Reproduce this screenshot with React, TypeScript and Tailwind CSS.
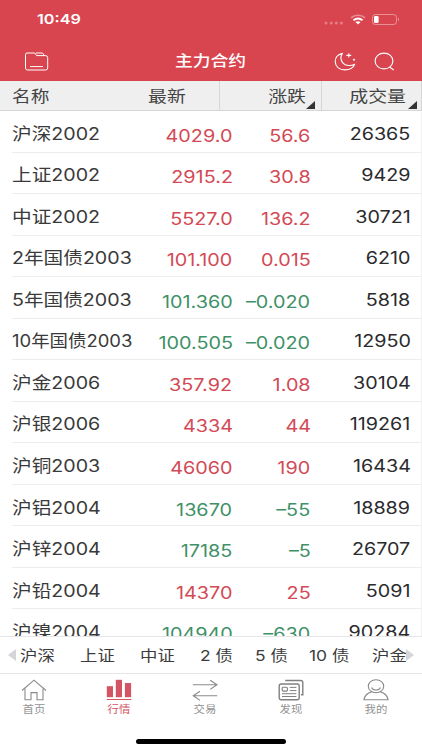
import React from 'react';

interface Quote {
  name: string;
  last: string;
  change: string;
  volume: string;
  down?: boolean;
  long?: boolean;
}

const quotes: Quote[] = [
  { name: '沪深2002', last: '4029.0', change: '56.6', volume: '26365' },
  { name: '上证2002', last: '2915.2', change: '30.8', volume: '9429' },
  { name: '中证2002', last: '5527.0', change: '136.2', volume: '30721' },
  { name: '2年国债2003', last: '101.100', change: '0.015', volume: '6210' },
  { name: '5年国债2003', last: '101.360', change: '–0.020', volume: '5818', down: true },
  { name: '10年国债2003', last: '100.505', change: '–0.020', volume: '12950', down: true, long: true },
  { name: '沪金2006', last: '357.92', change: '1.08', volume: '30104' },
  { name: '沪银2006', last: '4334', change: '44', volume: '119261' },
  { name: '沪铜2003', last: '46060', change: '190', volume: '16434' },
  { name: '沪铝2004', last: '13670', change: '–55', volume: '18889', down: true },
  { name: '沪锌2004', last: '17185', change: '–5', volume: '26707', down: true },
  { name: '沪铅2004', last: '14370', change: '25', volume: '5091' },
  { name: '沪镍2004', last: '104940', change: '–630', volume: '90284', down: true },
];

const categories = [
  { label: '沪深', width: 'w-[35px]' },
  { label: '上证', width: 'w-[35px]' },
  { label: '中证', width: 'w-[35px]' },
  { label: '2 债', width: 'w-[30px]' },
  { label: '5 债', width: 'w-[29px]' },
  { label: '10 债', width: 'w-[38px]' },
  { label: '沪金', width: 'w-[35px]' },
];

const HomeIcon = () => (
  <svg width="26" height="22" viewBox="0 0 26 22" fill="none" stroke="#8a8a8a" strokeWidth="1.1">
    <path d="M1 11.5L13 1.2L25 11.5" />
    <path d="M4 9.5V20.7H10V13.6H16V20.7H22V9.5" />
  </svg>
);

const ChartIcon = () => (
  <svg width="26" height="22" viewBox="0 0 26 22" fill="#d35462">
    <rect x="0.8" y="7.2" width="6.2" height="11" />
    <rect x="9.8" y="0.8" width="6.2" height="17.4" />
    <rect x="18.9" y="4" width="6.2" height="14.2" />
    <rect x="0.8" y="20" width="24.5" height="1" />
  </svg>
);

const TradeIcon = () => (
  <svg width="26" height="22" viewBox="0 0 26 22" fill="none" stroke="#8a8a8a" strokeWidth="1.1">
    <path d="M0.8 5.8H25M18.2 1.2L25 5.8L18.2 10.4" />
    <path d="M25.2 16.8H1.2M8 12.2L1.2 16.8L8 21.4" />
  </svg>
);

const NewsIcon = () => (
  <svg width="26" height="22" viewBox="0 0 26 22" fill="none" stroke="#808080" strokeWidth="1.4">
    <path d="M7.2 1.5H22.6Q24.8 1.5 24.8 3.6V15.8H23" />
    <rect x="1.2" y="5" width="20" height="15.8" rx="2" />
    <rect x="4.2" y="8.2" width="5.2" height="3.9" rx="1" strokeWidth="1.1" />
    <path d="M11.8 8.4H18.4M11.8 11.6H18.4M4 14.7H18.4M4 17.5H18.4" strokeWidth="1" />
  </svg>
);

const UserIcon = () => (
  <svg width="26" height="22" viewBox="0 0 26 22" fill="none" stroke="#8a8a8a" strokeWidth="1.1">
    <ellipse cx="13" cy="7.3" rx="7.7" ry="6.5" />
    <path d="M8.6 8.4C10.2 11.8 15.8 11.8 17.4 8.4" />
    <path d="M8.6 12.9C4.6 14 1.6 16.8 0.9 20.8H25.1C24.4 16.8 21.4 14 17.4 12.9" />
  </svg>
);

const navItems = [
  { label: '首页', icon: HomeIcon },
  { label: '行情', icon: ChartIcon, active: true },
  { label: '交易', icon: TradeIcon },
  { label: '发现', icon: NewsIcon },
  { label: '我的', icon: UserIcon },
];

const SortMark = ({ className }: { className: string }) => (
  <svg className={`absolute bottom-[1px] ${className}`} width="9" height="8" viewBox="0 0 9 8">
    <path d="M9 0V8H0Z" fill="#333" />
  </svg>
);

const StatusBar = () => (
  <div className="h-[39px] flex items-center justify-between pl-[37px] pr-[22px]">
    <span className="inline-block origin-left scale-x-[1.18] text-[13.7px] font-semibold leading-none">10:49</span>
    <div className="flex items-center">
      <svg className="mt-[6px]" width="20" height="4" viewBox="0 0 20 4" fill="#fff" opacity="0.3">
        <circle cx="2" cy="2" r="1.5" />
        <circle cx="7.2" cy="2" r="1.5" />
        <circle cx="12.3" cy="2" r="1.5" />
        <circle cx="17.4" cy="2" r="1.5" />
      </svg>
      <svg className="ml-[6px]" width="16" height="11" viewBox="0 0 16 11" fill="none" stroke="#fff">
        <path d="M1 3.9C5 0.4 11 0.4 15 3.9" strokeWidth="1.6" opacity="0.4" />
        <path d="M3.5 6.2C6.3 4 9.7 4 12.5 6.2" strokeWidth="1.9" />
        <path d="M5.4 8.1C7 6.9 9 6.9 10.6 8.1L8 10.4Z" fill="#fff" stroke="none" />
      </svg>
      <svg className="ml-[6px]" width="28" height="11" viewBox="0 0 28 11">
        <rect x="0.5" y="0.5" width="24" height="10" rx="2.8" fill="none" stroke="#fff" opacity="0.4" />
        <rect x="2" y="1.9" width="4.6" height="7.2" rx="1.3" fill="#fff" />
        <path d="M26 3.8Q28 5.5 26 7.2Z" fill="#fff" opacity="0.5" />
      </svg>
    </div>
  </div>
);

const TitleBar = () => (
  <div className="h-[42px] flex items-center justify-between pl-[24px] pr-[27px] pt-[2px]">
    <svg width="25" height="19" viewBox="0 0 25 19" fill="none" stroke="#fff" strokeWidth="1">
      <path d="M3 1H10.8L12.6 3.6H21.5Q23.7 3.6 23.7 5.6V16Q23.7 18 21.5 18H3.5Q1.5 18 1.5 16V2.8Q1.5 1 3 1Z" />
      <path d="M12 1H18Q19.6 1.2 20 3.6M6 14.6H19" />
    </svg>
    <h1 className="ml-[39px] w-[72px] flex justify-center whitespace-nowrap text-[15.3px] font-medium leading-none">
      <span className="inline-block scale-x-[1.16]">主力合约</span>
    </h1>
    <div className="flex items-center gap-[17px]">
      <svg width="23" height="19" viewBox="0 0 23 19" fill="none" stroke="#fff" strokeWidth="1.1" strokeLinejoin="round">
        <path d="M8.5 1.3C4.2 2.4 1.2 5.6 1.2 9.6C1.2 14.4 5.4 17.9 10.8 17.9C15.6 17.9 19.6 15.6 20.7 12.2C16.6 14.4 11.4 13.9 8.8 10.8C6.5 8.1 6.6 4.2 8.5 1.3Z" />
        <path d="M14.8 1.2V5.6M12.4 3.4H17.2M20 6.8V8.8M18.9 7.8H21.1" />
      </svg>
      <svg width="21" height="19" viewBox="0 0 21 19" fill="none" stroke="#fff" strokeWidth="1.1">
        <ellipse cx="10" cy="9" rx="8.9" ry="7.9" />
        <path d="M15.6 15L19.7 18" />
      </svg>
    </div>
  </div>
);

const QuoteRow = ({ quote }: { quote: Quote }) => (
  <div className="ml-[12px] h-[41.54px] shrink-0 flex items-center border-b border-[#ededef] pt-[6px] pr-[10.5px] text-[17px] leading-none whitespace-nowrap">
    <div className="flex-1">
      <span className={`inline-block origin-left text-[#3a3a3a] ${quote.long ? 'scale-x-[1.085]' : 'scale-x-[1.155]'}`}>{quote.name}</span>
    </div>
    <div className={`flex pt-[4px] ${quote.down ? 'text-[#3f9168]' : 'text-[#d34a56]'}`}>
      <div className="w-[90px] text-right">
        <span className="inline-block origin-right scale-x-[1.165]">{quote.last}</span>
      </div>
      <div className="w-[78px] text-right">
        <span className="inline-block origin-right scale-x-[1.165]">{quote.change}</span>
      </div>
    </div>
    <div className="w-[100px] text-right">
      <span className="inline-block origin-right scale-x-[1.16] text-[#2b2b2e]">{quote.volume}</span>
    </div>
  </div>
);

const App: React.FC = () => {
  return (
    <div className="w-[422px] h-[750px] flex flex-col overflow-hidden bg-white font-['Inter','Noto_Sans_CJK_SC',sans-serif]">
      <header className="bg-[#d9454f] text-white">
        <StatusBar />
        <TitleBar />
      </header>

      {/* Column headings */}
      <div className="h-[30px] shrink-0 flex bg-[#efefef] border-b border-[#d6d6d6] text-[16px] leading-[30px] text-[#444] whitespace-nowrap">
        <div className="w-[148px] pl-[12px]">
          <span className="inline-block origin-left scale-x-[1.17]">名称</span>
        </div>
        <div className="w-[72px] border-r border-[#d6d6d6]">
          <span className="inline-block origin-left scale-x-[1.18]">最新</span>
        </div>
        <div className="relative w-[102px] border-r border-[#d6d6d6] pr-[15px] text-right">
          <span className="inline-block origin-right scale-x-[1.18]">涨跌</span>
          <SortMark className="right-[6px]" />
        </div>
        <div className="relative flex-1 border-r border-[#d6d6d6] pr-[15px] text-right">
          <span className="inline-block origin-right scale-x-[1.18]">成交量</span>
          <SortMark className="right-[4px]" />
        </div>
      </div>

      {/* Quotes, the last row is cut off by the category strip */}
      <div className="h-[525px] shrink-0 flex flex-col overflow-hidden border-r border-[#f1f1f3]">
        {quotes.map(quote => (
          <QuoteRow key={quote.name} quote={quote} />
        ))}
      </div>

      {/* Category strip */}
      <div className="relative h-[38px] shrink-0 flex items-center gap-[25px] border-y border-[#e6e6e8] pl-[20px] text-[15px] leading-none text-[#3c3c3c] whitespace-nowrap">
        <svg className="absolute left-[8px] top-[12px]" width="8" height="12" viewBox="0 0 8 12">
          <path d="M8 0V12L0 6Z" fill="#d5d5d9" />
        </svg>
        {categories.map(category => (
          <div key={category.label} className={`${category.width} shrink-0`}>
            <span className="inline-block origin-left scale-x-[1.16]">{category.label}</span>
          </div>
        ))}
        <svg className="absolute left-[406px] top-[12px]" width="8" height="12" viewBox="0 0 8 12">
          <path d="M0 0V12L8 6Z" fill="#d5d5d9" />
        </svg>
      </div>

      {/* Bottom navigation */}
      <nav className="-ml-[9px] w-[428px] h-[65px] shrink-0 flex pt-[5px]">
        {navItems.map(({ label, icon: Icon, active }) => (
          <div key={label} className="flex-1 flex flex-col items-center gap-[3px]">
            <Icon />
            <span className={`scale-x-[1.14] text-[10px] leading-[10px] ${active ? 'text-[#d35462]' : 'text-[#939393]'}`}>{label}</span>
          </div>
        ))}
      </nav>
      <div className="mx-auto w-[150px] h-[5px] shrink-0 rounded-full bg-black" />
    </div>
  );
};

export default App;
